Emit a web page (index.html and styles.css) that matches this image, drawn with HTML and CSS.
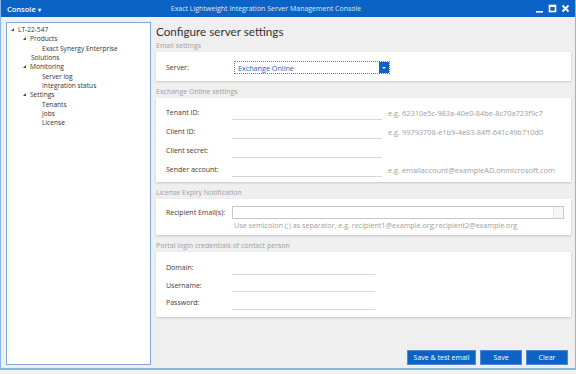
FILE: index.html
```html
<!DOCTYPE html>
<html lang="en">
<head>
    <meta charset="UTF-8">
    <title>Exact Lightweight Integration Server Management Console</title>
    <link rel="stylesheet" href="styles.css">
</head>
<body>
    <div class="window">
        <header class="titlebar">
            <span class="menu">Console <span class="caret">&#9662;</span></span>
            <span class="title">Exact Lightweight Integration Server Management Console</span>
            <span class="controls">
                <svg width="9" height="9" viewBox="0 0 9 9"><rect x="1" y="7" width="7" height="1.6" fill="#fff"/></svg>
                <svg width="9" height="9" viewBox="0 0 9 9"><rect x="1.5" y="1.5" width="6" height="6" fill="none" stroke="#fff" stroke-width="1.6"/><rect x="1" y="1" width="7" height="2" fill="#fff"/></svg>
                <svg width="9" height="9" viewBox="0 0 9 9"><path d="M1.5 1.5 L7.5 7.5 M7.5 1.5 L1.5 7.5" stroke="#fff" stroke-width="1.8"/></svg>
            </span>
        </header>

        <div class="main">
            <nav class="tree">
                <div class="node l0"><span class="arrow"></span>LT-22-547</div>
                <div class="node l1"><span class="arrow"></span>Products</div>
                <div class="node l2">Exact Synergy Enterprise</div>
                <div class="node l1">Solutions</div>
                <div class="node l1"><span class="arrow"></span>Monitoring</div>
                <div class="node l2">Server log</div>
                <div class="node l2">Integration status</div>
                <div class="node l1"><span class="arrow"></span>Settings</div>
                <div class="node l2">Tenants</div>
                <div class="node l2">Jobs</div>
                <div class="node l2">License</div>
            </nav>

            <section class="content">
                <h1>Configure server settings</h1>

                <div class="group-title">Email settings</div>
                <div class="card card-email">
                    <div class="row">
                        <label>Server:</label>
                        <div class="select">
                            <span>Exchange Online</span>
                            <span class="drop"><i></i></span>
                        </div>
                    </div>
                </div>

                <div class="group-title">Exchange Online settings</div>
                <div class="card card-exchange">
                    <div class="row">
                        <label>Tenant ID:</label>
                        <div class="line"></div>
                        <span class="hint">e.g. 62310e5c-983a-40e0-84be-8c70a723f9c7</span>
                    </div>
                    <div class="row">
                        <label>Client ID:</label>
                        <div class="line"></div>
                        <span class="hint">e.g. 99793708-e1b9-4e83-84ff-641c49b710d0</span>
                    </div>
                    <div class="row">
                        <label>Client secret:</label>
                        <div class="line"></div>
                    </div>
                    <div class="row">
                        <label>Sender account:</label>
                        <div class="line"></div>
                        <span class="hint">e.g. emailaccount@exampleAD.onmicrosoft.com</span>
                    </div>
                </div>

                <div class="group-title">License Expiry Notification</div>
                <div class="card card-license">
                    <div class="row">
                        <label>Recipient Email(s):</label>
                        <div class="textbox"><span class="scroll"></span></div>
                    </div>
                    <div class="note">Use semicolon (;) as separator, e.g. recipient1@example.org;recipient2@example.org</div>
                </div>

                <div class="group-title">Portal login credentials of contact person</div>
                <div class="card card-portal">
                    <div class="row">
                        <label>Domain:</label>
                        <div class="line short"></div>
                    </div>
                    <div class="row">
                        <label>Username:</label>
                        <div class="line short"></div>
                    </div>
                    <div class="row">
                        <label>Password:</label>
                        <div class="line short"></div>
                    </div>
                </div>

                <div class="buttons">
                    <button class="btn wide">Save &amp; test email</button>
                    <button class="btn">Save</button>
                    <button class="btn">Clear</button>
                </div>
            </section>
        </div>
    </div>
</body>
</html>
```

FILE: styles.css
```css
* {
    margin: 0;
    padding: 0;
    box-sizing: border-box;
    font-family: 'Open Sans', 'Noto Sans', sans-serif;
}

:root {
    --blue: #0b63c6;
    --frame: #8db4e6;
    --muted: #a0a0a0;
    --text: #3a3a3a;
}

body {
    background: #f3f3f3;
    width: 576px;
    height: 374px;
    overflow: hidden;
}

.window {
    height: 370px;
    background: #efefef;
    border-left: 1px solid var(--frame);
    border-right: 1px solid var(--frame);
    border-bottom: 2px solid var(--frame);
    display: flex;
    flex-direction: column;
}

.titlebar {
    height: 17px;
    background: var(--blue);
    color: #fff;
    display: flex;
    align-items: center;
    padding: 0 5px 0 6px;
    font-size: 7.5px;
}

.menu {
    font-weight: 600;
    width: 149px;
}

.caret {
    font-size: 6px;
}

.title {
    width: 220px;
    text-align: center;
    color: #dde8f8;
    font-size: 7px;
    white-space: nowrap;
}

.controls {
    margin-left: auto;
    display: flex;
    gap: 4px;
    align-items: center;
}

.main {
    flex: 1;
    display: flex;
    padding: 5px 4px 3px 5px;
    gap: 5px;
}

.tree {
    width: 145px;
    background: #fff;
    border: 1px solid #7fa9df;
    padding-top: 2px;
    font-size: 6.6px;
    color: #333;
}

.node {
    height: 9.33px;
    line-height: 9.33px;
    display: flex;
    align-items: center;
    white-space: nowrap;
}

.l0 { padding-left: 4px; }
.l1 { padding-left: 24px; }
.l2 { padding-left: 35px; }
.l1 .arrow { margin-left: -8px; }

.arrow {
    width: 0;
    height: 0;
    border-left: 3px solid transparent;
    border-bottom: 3px solid #444;
    margin-right: 4px;
}

.content {
    flex: 1;
    display: flex;
    flex-direction: column;
}

h1 {
    font-family: 'Lato', 'Open Sans', sans-serif;
    font-weight: normal;
    font-size: 11.7px;
    color: #333;
    line-height: 16px;
    margin-top: 1px;
}

.group-title {
    font-size: 7px;
    color: var(--muted);
    height: 13px;
    line-height: 13px;
}

.card {
    background: #fff;
    box-shadow: 0 1px 2px rgba(0, 0, 0, 0.18);
    margin-bottom: 4px;
    padding: 0 0 0 10px;
    font-size: 7px;
    color: var(--text);
}

.card-email { padding-top: 9px; height: 29px; }
.card-exchange { padding-top: 5px; height: 84px; }
.card-license { padding-top: 7px; height: 36px; }
.card-portal { padding-top: 7px; height: 65px; }

.row {
    display: flex;
    align-items: center;
    height: 19px;
}

.card-portal .row {
    height: 17.5px;
}

.card-email .row,
.card-license .row {
    height: 13px;
}

label {
    width: 66px;
    flex-shrink: 0;
}

.line {
    width: 150px;
    height: 12px;
    border-bottom: 1px solid #d8d8d8;
    margin-top: 2px;
}

.line.short {
    width: 143px;
}

.hint {
    color: var(--muted);
    margin-left: 6px;
    font-size: 7.4px;
}

.select {
    width: 156px;
    height: 13px;
    border: 1px dotted #777;
    display: flex;
    align-items: center;
    justify-content: space-between;
    color: #1565c0;
    padding-left: 3px;
    margin-left: 2px;
    font-size: 7.2px;
}

.drop {
    width: 10px;
    height: 11px;
    background: var(--blue);
    display: flex;
    align-items: center;
    justify-content: center;
}

.drop i {
    border-left: 2px solid transparent;
    border-right: 2px solid transparent;
    border-top: 2px solid #fff;
}

.textbox {
    width: 332px;
    height: 13px;
    border: 1px solid #c8c8c8;
    display: flex;
    justify-content: flex-end;
}

.scroll {
    width: 10px;
    border-left: 1px solid #e2e2e2;
    background: #f6f6f6;
}

.note {
    color: var(--muted);
    padding-left: 68px;
    margin-top: 1px;
    font-size: 7.2px;
}

.buttons {
    margin-top: auto;
    display: flex;
    justify-content: flex-end;
    gap: 4px;
    padding-right: 3px;
}

.btn {
    height: 15px;
    width: 42px;
    background: var(--blue);
    color: #fff;
    border: 1px solid #4c8ad6;
    font-size: 7px;
}

.btn.wide {
    width: 69px;
}
```
